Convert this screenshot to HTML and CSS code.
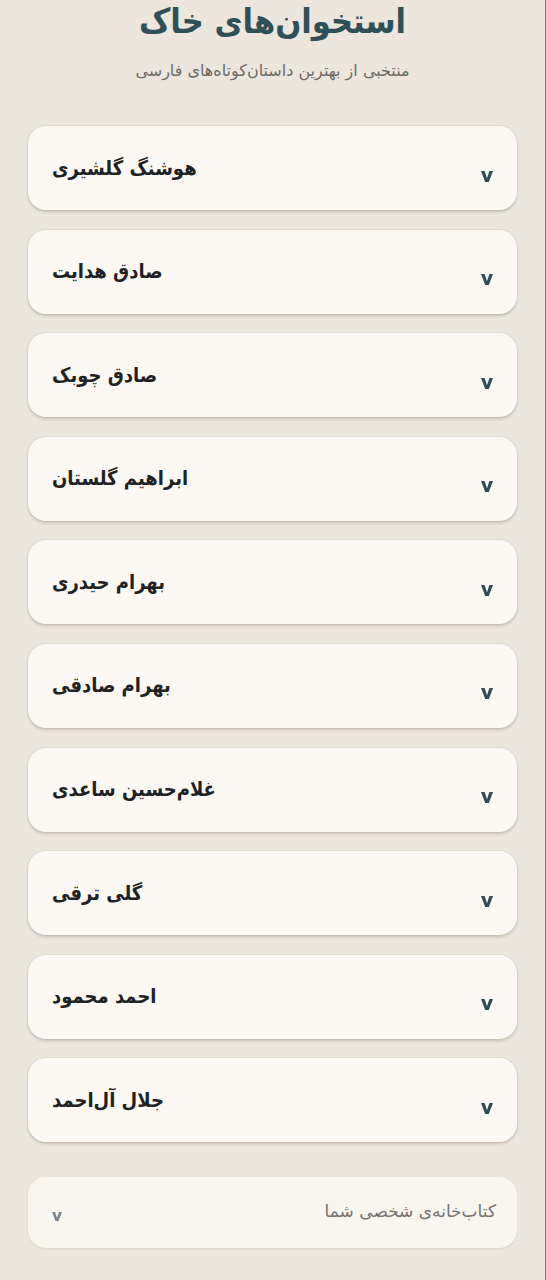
FILE: index.html
```html
<!DOCTYPE html>
<html lang="fa" dir="rtl">
<head>
<meta charset="utf-8">
<title>استخوان‌های خاک</title>
<link rel="stylesheet" href="styles.css">
</head>
<body>
<main class="page">
  <header class="hero">
    <h1 class="title">استخوان‌های خاک</h1>
    <p class="subtitle">منتخبی از بهترین داستان‌کوتاه‌های فارسی</p>
  </header>

  <section class="authors">
    <div class="card"><span class="chev"><svg viewBox="0 0 12 11"><path d="M0 0H3.6L6 7.2L8.4 0H12L7.8 11H4.2Z"/></svg></span><span class="name">هوشنگ گلشیری</span></div>
    <div class="card"><span class="chev"><svg viewBox="0 0 12 11"><path d="M0 0H3.6L6 7.2L8.4 0H12L7.8 11H4.2Z"/></svg></span><span class="name">صادق هدایت</span></div>
    <div class="card"><span class="chev"><svg viewBox="0 0 12 11"><path d="M0 0H3.6L6 7.2L8.4 0H12L7.8 11H4.2Z"/></svg></span><span class="name">صادق چوبک</span></div>
    <div class="card"><span class="chev"><svg viewBox="0 0 12 11"><path d="M0 0H3.6L6 7.2L8.4 0H12L7.8 11H4.2Z"/></svg></span><span class="name">ابراهیم گلستان</span></div>
    <div class="card"><span class="chev"><svg viewBox="0 0 12 11"><path d="M0 0H3.6L6 7.2L8.4 0H12L7.8 11H4.2Z"/></svg></span><span class="name">بهرام حیدری</span></div>
    <div class="card"><span class="chev"><svg viewBox="0 0 12 11"><path d="M0 0H3.6L6 7.2L8.4 0H12L7.8 11H4.2Z"/></svg></span><span class="name">بهرام صادقی</span></div>
    <div class="card"><span class="chev"><svg viewBox="0 0 12 11"><path d="M0 0H3.6L6 7.2L8.4 0H12L7.8 11H4.2Z"/></svg></span><span class="name">غلام‌حسین ساعدی</span></div>
    <div class="card"><span class="chev"><svg viewBox="0 0 12 11"><path d="M0 0H3.6L6 7.2L8.4 0H12L7.8 11H4.2Z"/></svg></span><span class="name">گلی ترقی</span></div>
    <div class="card"><span class="chev"><svg viewBox="0 0 12 11"><path d="M0 0H3.6L6 7.2L8.4 0H12L7.8 11H4.2Z"/></svg></span><span class="name">احمد محمود</span></div>
    <div class="card"><span class="chev"><svg viewBox="0 0 12 11"><path d="M0 0H3.6L6 7.2L8.4 0H12L7.8 11H4.2Z"/></svg></span><span class="name">جلال آل‌احمد</span></div>
  </section>

  <section class="library">
    <span class="lib-label">کتاب‌خانه‌ی شخصی شما</span>
    <span class="lib-chev"><svg viewBox="0 0 12 11"><path d="M0 0H3.6L6 7.2L8.4 0H12L7.8 11H4.2Z"/></svg></span>
  </section>
</main>
</body>
</html>
```

FILE: styles.css
```css
html, body {
  margin: 0;
  padding: 0;
}

body {
  background: #ede6dd;
  font-family: "DejaVu Sans", "Noto Sans", sans-serif;
  color: #1f2326;
  min-height: 100vh;
  border-right: 1px solid #7a7a7a;
  box-sizing: border-box;
}

.page {
  padding: 0 28px 30px 28px;
}

.hero {
  text-align: center;
}

.title {
  margin: 0;
  font-family: "DejaVu Sans Condensed", "DejaVu Sans", sans-serif;
  font-size: 34px;
  line-height: 42px;
  font-weight: bold;
  color: #2e5058;
}

.subtitle {
  margin: 18px 0 0 0;
  font-size: 16px;
  line-height: 22px;
  color: #6d6a66;
}

.authors {
  margin-top: 44px;
  display: flex;
  flex-direction: column;
  gap: 19.6px;
}

.card {
  display: flex;
  align-items: center;
  justify-content: space-between;
  height: 84px;
  padding: 0 24px;
  box-sizing: border-box;
  background: #fcf9f4;
  border-radius: 18px;
  box-shadow: 0 2px 3px rgba(80, 70, 55, 0.22), 0 0 0 1px rgba(200, 190, 175, 0.25);
}

.name {
  font-family: "DejaVu Sans Condensed", "DejaVu Sans", sans-serif;
  font-size: 20px;
  font-weight: bold;
  color: #1e2225;
  margin-top: -1px;
}

.chev {
  display: flex;
  margin-top: 16px;
}

.chev svg {
  width: 12px;
  height: 11px;
  fill: #2f4d55;
}

.library {
  margin-top: 35px;
  display: flex;
  align-items: center;
  justify-content: space-between;
  height: 71px;
  padding: 0 21px 0 24px;
  box-sizing: border-box;
  background: #f9f5ef;
  border-radius: 18px;
  box-shadow: 0 1px 2px rgba(80, 70, 55, 0.12);
}

.lib-label {
  font-size: 17px;
  color: #77736e;
  margin-top: -4px;
}

.lib-chev {
  display: flex;
  margin-top: 8px;
}

.lib-chev svg {
  width: 10px;
  height: 9px;
  fill: #7b848a;
}
```
